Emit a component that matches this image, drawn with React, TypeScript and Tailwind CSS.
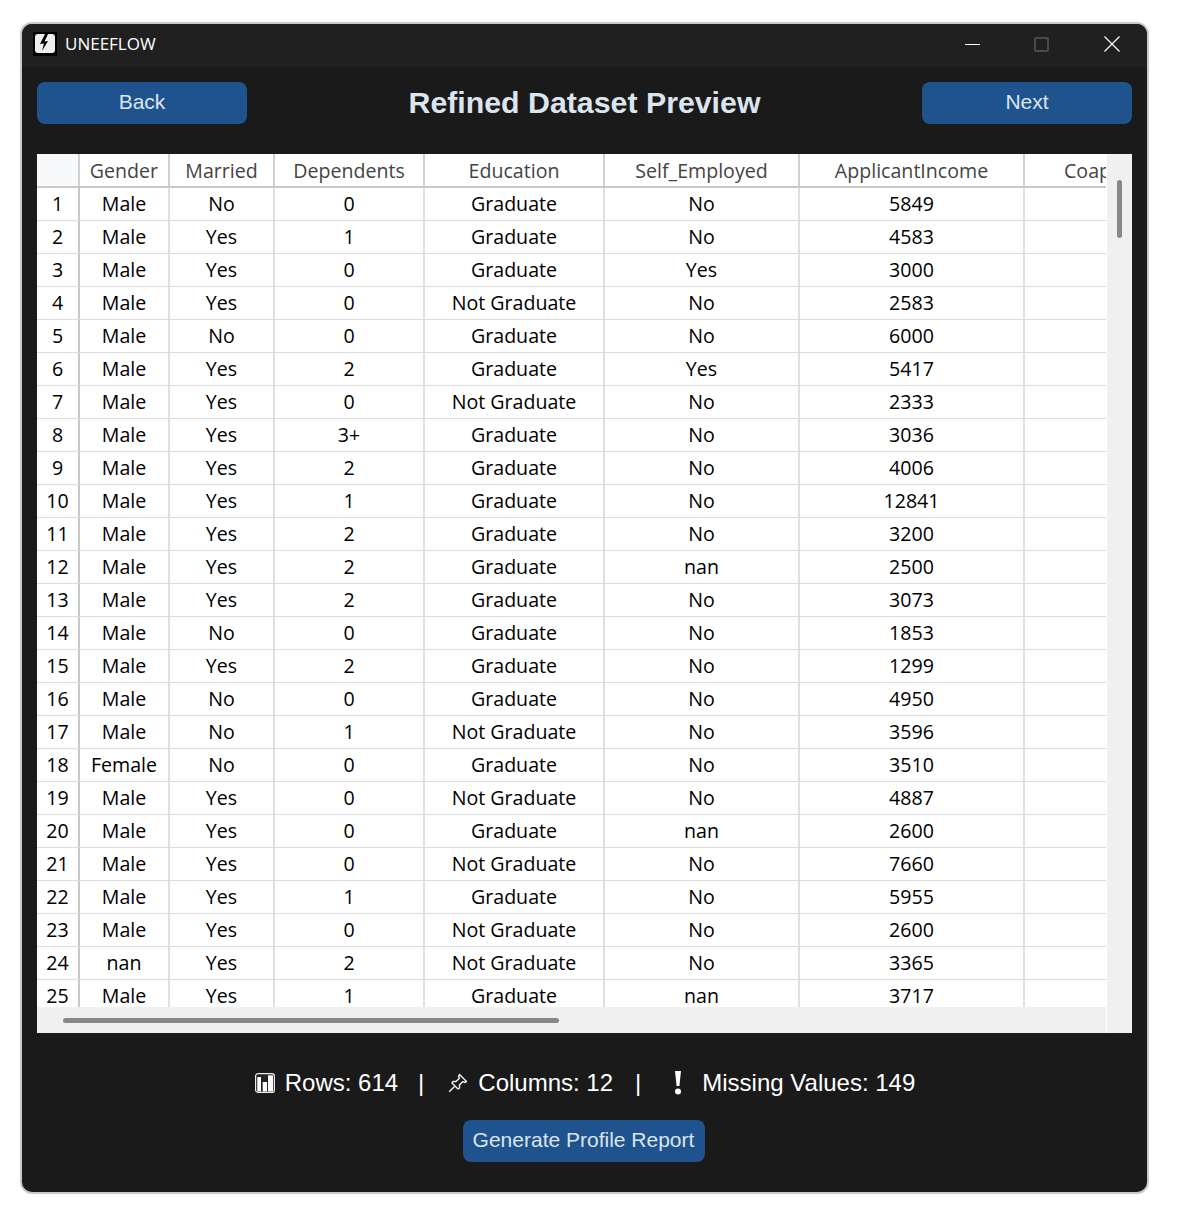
import React from "react";

/* =========================================================
   DATA
========================================================= */

const columns = [
  { name: "Gender", width: "w-[90px]" },
  { name: "Married", width: "w-[105px]" },
  { name: "Dependents", width: "w-[150px]" },
  { name: "Education", width: "w-[180px]" },
  { name: "Self_Employed", width: "w-[195px]" },
  { name: "ApplicantIncome", width: "w-[225px]" },
  { name: "CoapplicantIncome", width: "w-[256px]" },
];

const rows = [
  ["Male", "No", "0", "Graduate", "No", "5849"],
  ["Male", "Yes", "1", "Graduate", "No", "4583"],
  ["Male", "Yes", "0", "Graduate", "Yes", "3000"],
  ["Male", "Yes", "0", "Not Graduate", "No", "2583"],
  ["Male", "No", "0", "Graduate", "No", "6000"],
  ["Male", "Yes", "2", "Graduate", "Yes", "5417"],
  ["Male", "Yes", "0", "Not Graduate", "No", "2333"],
  ["Male", "Yes", "3+", "Graduate", "No", "3036"],
  ["Male", "Yes", "2", "Graduate", "No", "4006"],
  ["Male", "Yes", "1", "Graduate", "No", "12841"],
  ["Male", "Yes", "2", "Graduate", "No", "3200"],
  ["Male", "Yes", "2", "Graduate", "nan", "2500"],
  ["Male", "Yes", "2", "Graduate", "No", "3073"],
  ["Male", "No", "0", "Graduate", "No", "1853"],
  ["Male", "Yes", "2", "Graduate", "No", "1299"],
  ["Male", "No", "0", "Graduate", "No", "4950"],
  ["Male", "No", "1", "Not Graduate", "No", "3596"],
  ["Female", "No", "0", "Graduate", "No", "3510"],
  ["Male", "Yes", "0", "Not Graduate", "No", "4887"],
  ["Male", "Yes", "0", "Graduate", "nan", "2600"],
  ["Male", "Yes", "0", "Not Graduate", "No", "7660"],
  ["Male", "Yes", "1", "Graduate", "No", "5955"],
  ["Male", "Yes", "0", "Not Graduate", "No", "2600"],
  ["nan", "Yes", "2", "Not Graduate", "No", "3365"],
  ["Male", "Yes", "1", "Graduate", "nan", "3717"],
];

/* =========================================================
   ICONS
========================================================= */

function Logo() {
  return (
    <svg width="24" height="24" viewBox="0 0 24 24" className="shrink-0">
      <rect width="24" height="24" fill="#000" />
      <rect x="2" y="2" width="20" height="19" rx="3" fill="#eee" />
      <path d="M12 2 L7 12 L11 11.5 L9 19 L15 9 L11.5 9.5 L15 2 Z" fill="#000" />
    </svg>
  );
}

function ChartIcon() {
  return (
    <svg width="20" height="20" viewBox="0 0 20 20" className="shrink-0">
      <rect x="0.6" y="0.6" width="18.8" height="18.8" rx="2.5" fill="#222" stroke="#ececec" strokeWidth="1.2" />
      <rect x="2.3" y="4" width="3.7" height="14.5" fill="#fff" />
      <rect x="7.7" y="9" width="4.3" height="9.5" fill="#fff" />
      <rect x="13" y="2.3" width="5" height="16.2" fill="#fff" />
    </svg>
  );
}

function PinIcon() {
  return (
    <svg width="20" height="20" viewBox="0 0 20 20" fill="none" stroke="#f4f4f4" strokeWidth="1.4" className="shrink-0">
      <path d="M11.5 1.5 L18.5 8.5 L16.5 9.5 L14.8 8.6 L11.5 12 L11.6 15 L10 16 L4 10 L5 8.4 L8 8.5 L11.4 5.2 L10.5 3.5 Z" strokeLinejoin="round" />
      <path d="M6.5 13.5 L1.2 18.8" />
    </svg>
  );
}

function BangIcon() {
  return (
    <svg width="8" height="24" viewBox="0 0 8 24" className="shrink-0">
      <path d="M1 0 H7 L5.4 15 H2.6 Z" fill="#fff" />
      <circle cx="4" cy="20.5" r="3" fill="#fff" />
    </svg>
  );
}

/* =========================================================
   APP
========================================================= */

const buttonClass =
  "bg-[#1f538d] text-[#dce4ee] text-[21px] rounded-lg flex items-center justify-center h-[42px] pb-[2px]";

export default function App() {
  return (
    <div className="w-[1179px] h-[1210px] bg-white pt-[22px] pl-[20px] font-['Liberation_Sans',sans-serif]">
      <div className="w-[1129px] h-[1172px] bg-[#1a1a1a] border-2 border-[#c9c9c9] rounded-xl overflow-hidden flex flex-col">
        {/* TITLE BAR */}
        <div className="h-[43px] bg-[#202020] flex items-center pl-[11px] pb-[3px] shrink-0">
          <Logo />
          <span className="ml-2 text-[17px] text-white font-['Open_Sans',sans-serif]">UNEEFLOW</span>
          <div className="ml-auto flex items-center">
            <div className="w-[15px] h-px bg-white mr-[54px]" />
            <div className="w-[15px] h-[15px] border-2 border-[#4a4a4a] rounded-[2px] mr-[55px]" />
            <svg width="16" height="16" viewBox="0 0 16 16" className="mr-[27px]" stroke="#fff" strokeWidth="1.2">
              <path d="M0.5 0.5 L15.5 15.5 M15.5 0.5 L0.5 15.5" />
            </svg>
          </div>
        </div>

        {/* HEADER */}
        <div className="flex items-center justify-between px-[15px] mt-[15px] h-[42px] shrink-0">
          <button className={`${buttonClass} w-[210px]`}>Back</button>
          <h1 className="text-[30.3px] leading-none font-bold text-[#dce4ee]">Refined Dataset Preview</h1>
          <button className={`${buttonClass} w-[210px]`}>Next</button>
        </div>

        {/* TABLE */}
        <div className="ml-[15px] mt-[30px] h-[879px] w-[1095px] bg-[#f0f0f0] flex shrink-0 font-['Open_Sans',sans-serif]">
          <div className="w-[1069px] flex flex-col">
            <div className="h-[853px] overflow-hidden bg-white">
              <div className="flex h-[34px] border-b-2 border-b-[#c8c8c8] w-max">
                <div className="w-[43px] bg-[#f8f9fb] border-r-2 border-[#d0d0d0]" />
                {columns.map((c) => (
                  <div
                    key={c.name}
                    className={`${c.width} border-r-2 border-[#d0d0d0] text-[19.6px] text-[#444] flex items-center justify-center whitespace-nowrap pt-px`}
                  >
                    {c.name}
                  </div>
                ))}
              </div>
              {rows.map((row, i) => (
                <div key={i} className="flex h-[33px] border-b border-[#dcdcdc] w-max">
                  <div className="w-[43px] border-r-2 border-[#c8c8c8] text-[19.6px] text-black flex items-center justify-center">
                    {i + 1}
                  </div>
                  {columns.map((c, j) => (
                    <div
                      key={c.name}
                      className={`${c.width} border-r-2 border-[#e0e0e0] text-[19.6px] text-black flex items-center justify-center`}
                    >
                      {row[j]}
                    </div>
                  ))}
                </div>
              ))}
            </div>
            {/* HORIZONTAL SCROLLBAR */}
            <div className="flex-1 flex items-center pl-[26px]">
              <div className="w-[496px] h-[5px] rounded-full bg-[#888]" />
            </div>
          </div>
          {/* VERTICAL SCROLLBAR */}
          <div className="w-[26px] border-l border-white pt-[26px] pl-[10px]">
            <div className="w-[5px] h-[58px] rounded-full bg-[#888]" />
          </div>
        </div>

        {/* STATS */}
        <div className="mt-[36px] pl-px flex items-center justify-center text-[24px] text-white h-[28px] shrink-0">
          <ChartIcon />
          <span className="ml-[10px]">Rows: 614</span>
          <span className="ml-[20px]">|</span>
          <span className="ml-[24px]"><PinIcon /></span>
          <span className="ml-[10px]">Columns: 12</span>
          <span className="ml-[22px]">|</span>
          <span className="ml-[33px]"><BangIcon /></span>
          <span className="ml-[20px]">Missing Values: 149</span>
        </div>

        {/* GENERATE */}
        <div className="mt-[23px] pr-[2px] flex justify-center shrink-0">
          <button className={`${buttonClass} w-[242px] text-[21.2px]`}>Generate Profile Report</button>
        </div>
      </div>
    </div>
  );
}
